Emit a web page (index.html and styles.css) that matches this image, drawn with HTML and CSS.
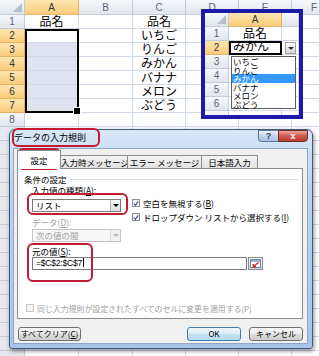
FILE: index.html
```html
<!DOCTYPE html>
<html lang="ja">
<head>
    <meta charset="UTF-8">
    <title>データの入力規則</title>
    <link rel="stylesheet" href="styles.css">
</head>
<body>

    <!-- Worksheet behind everything -->
    <div class="sheet">
        <div class="hd corner"></div>
        <div class="hd on">A</div>
        <div class="hd">B</div>
        <div class="hd">C</div>
        <div class="hd">D</div>
        <div class="hd">E</div>
        <div class="hd last">F</div>

        <div class="hd">1</div><div class="cell">品名</div><div class="cell"></div><div class="cell">品名</div><div class="cell"></div><div class="cell"></div><div class="cell"></div>
        <div class="hd on">2</div><div class="cell"></div><div class="cell"></div><div class="cell">いちご</div><div class="cell"></div><div class="cell"></div><div class="cell"></div>
        <div class="hd on">3</div><div class="cell pick"></div><div class="cell"></div><div class="cell">りんご</div><div class="cell"></div><div class="cell"></div><div class="cell"></div>
        <div class="hd on">4</div><div class="cell pick"></div><div class="cell"></div><div class="cell">みかん</div><div class="cell"></div><div class="cell"></div><div class="cell"></div>
        <div class="hd on">5</div><div class="cell pick"></div><div class="cell"></div><div class="cell">バナナ</div><div class="cell"></div><div class="cell"></div><div class="cell"></div>
        <div class="hd on">6</div><div class="cell pick"></div><div class="cell"></div><div class="cell">メロン</div><div class="cell"></div><div class="cell"></div><div class="cell"></div>
        <div class="hd on">7</div><div class="cell pick"></div><div class="cell"></div><div class="cell">ぶどう</div><div class="cell"></div><div class="cell"></div><div class="cell"></div>
        <div class="hd">8</div><div class="cell"></div><div class="cell"></div><div class="cell"></div><div class="cell"></div><div class="cell"></div><div class="cell"></div>

        <!-- rows 9 and below, only their edges show -->
        <div class="hd rest"></div><div class="cell rest"></div><div class="cell rest"></div><div class="cell rest"></div><div class="cell rest"></div><div class="cell rest"></div><div class="cell rest"></div>

        <div class="selection"></div>
    </div>

    <!-- Close-up of the drop-down in action -->
    <div class="closeup">
        <div class="mini">
            <div class="hd corner"></div><div class="hd on">A</div><div class="hd"></div>
            <div class="hd">1</div><div class="cell">品名</div><div class="cell"></div>
            <div class="hd on">2</div><div class="cell active">みかん</div><div class="cell"></div>
            <div class="hd">3</div><div class="cell"></div><div class="cell"></div>
            <div class="hd">4</div><div class="cell"></div><div class="cell"></div>
            <div class="hd">5</div><div class="cell"></div><div class="cell"></div>
            <div class="hd">6</div><div class="cell"></div><div class="cell"></div>
            <div class="hd"></div><div class="cell"></div><div class="cell"></div>
        </div>
        <div class="drop-btn"></div>
        <ul class="drop-list">
            <li>いちご</li>
            <li>りんご</li>
            <li class="hl">みかん</li>
            <li>バナナ</li>
            <li>メロン</li>
            <li>ぶどう</li>
        </ul>
    </div>

    <!-- Data validation dialog -->
    <div class="dialog">
        <div class="titlebar">
            <span class="title">データの入力規則</span>
            <div class="caption">
                <span class="help">?</span>
                <span class="close">x</span>
            </div>
        </div>

        <div class="client">
            <div class="tabs">
                <span class="tab on w1">設定</span>
                <span class="tab w2">入力時メッセージ</span>
                <span class="tab w3">エラー メッセージ</span>
                <span class="tab w4">日本語入力</span>
            </div>

            <div class="panel">
                <div class="group"><span>条件の設定</span></div>

                <div class="split">
                    <div class="left">
                        <div class="label">入力値の種類(<u>A</u>):</div>
                        <div class="combo"><span>リスト</span><i class="arrow"></i></div>
                        <div class="label off spaced">データ(<u>D</u>):</div>
                        <div class="combo off tight"><span>次の値の間</span><i class="arrow"></i></div>
                    </div>
                    <div class="checks">
                        <div class="check"><span class="box"><svg width="7" height="7" viewBox="0 0 7 7"><path d="M1 3.5 L2.8 5.6 L6 1" fill="none" stroke="#33478a" stroke-width="1.3"/></svg></span>空白を無視する(<u>B</u>)</div>
                        <div class="check"><span class="box"><svg width="7" height="7" viewBox="0 0 7 7"><path d="M1 3.5 L2.8 5.6 L6 1" fill="none" stroke="#33478a" stroke-width="1.3"/></svg></span>ドロップダウン リストから選択する(<u>I</u>)</div>
                    </div>
                </div>

                <div class="label source-label">元の値(<u>S</u>):</div>
                <div class="source">
                    <div class="input">=$C$2:$C$7<span class="caret"></span></div>
                    <div class="refbtn">
                        <svg width="11" height="9" viewBox="0 0 11 9">
                            <rect x="0.5" y="0.5" width="10" height="8" fill="#fff" stroke="#6b84ad"/>
                            <rect x="1" y="1" width="9" height="2" fill="#9db4d8"/>
                            <path d="M8.5 3.5 L3.5 7.5 M3.2 5 L3.2 7.8 L6 7.8" fill="none" stroke="#d0202a" stroke-width="1.4"/>
                        </svg>
                    </div>
                </div>

                <div class="check off apply"><span class="box"></span>同じ入力規則が設定されたすべてのセルに変更を適用する(P)</div>
            </div>

            <div class="buttons">
                <button class="btn wide">すべてクリア(<u>C</u>)</button>
                <span class="spacer"></span>
                <button class="btn default">OK</button>
                <button class="btn">キャンセル</button>
            </div>
        </div>

        <!-- red annotation rings -->
        <div class="mark mark-title"></div>
        <div class="mark mark-tab"></div>
        <div class="mark mark-type"></div>
        <div class="mark mark-source"></div>
    </div>

</body>
</html>
```

FILE: styles.css
```css
* {
    box-sizing: border-box;
}

body {
    margin: 0;
    width: 320px;
    height: 356px;
    overflow: hidden;
    position: relative;
    background: #fff;
    font-family: "Noto Sans CJK JP", sans-serif;
    color: #000;
}

/* Worksheet */
.sheet {
    position: relative;
    display: grid;
    grid-template-columns: 25px 54px 54px 53px 53px 53px 28px;
    grid-template-rows: 15px repeat(8, 14px) 240px;
    width: 320px;
}

.hd {
    display: flex;
    align-items: center;
    justify-content: center;
    background: linear-gradient(#f5f7fa, #e1e6ed);
    border-right: 1px solid #c3cbd6;
    border-bottom: 1px solid #c3cbd6;
    color: #5b6578;
    font: 10px "Liberation Sans", sans-serif;
}

.hd.last {
    justify-content: flex-end;
    padding-right: 2px;
}

.hd.on {
    background: linear-gradient(#fde5b0, #f8cd7c);
    border-color: #e4b463;
    color: #363636;
}

.corner {
    position: relative;
}

.corner::after {
    content: "";
    position: absolute;
    right: 2px;
    bottom: 2px;
    border-left: 9px solid transparent;
    border-bottom: 9px solid #b5bfcc;
}

.cell {
    display: flex;
    align-items: flex-end;
    justify-content: center;
    border-right: 1px solid #d0d7e5;
    border-bottom: 1px solid #d0d7e5;
    font-size: 12px;
    line-height: 1;
    padding-bottom: 1px;
    white-space: nowrap;
}

.cell.pick {
    background: #dfe2ef;
}

.cell.rest {
    border-bottom: none;
    background: repeating-linear-gradient(transparent 0 13px, #d0d7e5 13px 14px);
}

.hd.rest {
    border-bottom: none;
    background: repeating-linear-gradient(#e5e9ef 0 13px, #c3cbd6 13px 14px);
}

/* outline of the picked range A2:A7, laid over the cells */
.selection {
    position: absolute;
    grid-column: 2 / 3;
    grid-row: 3 / 9;
    inset: 0;
    border: 2px solid #000;
}

.selection::after {
    content: "";
    position: absolute;
    right: -4px;
    bottom: -4px;
    width: 6px;
    height: 6px;
    background: #000;
    border: 1px solid #fff;
}

/* Close-up box */
.closeup {
    position: absolute;
    left: 201px;
    top: 9px;
    width: 102px;
    height: 110px;
    border: 4px solid #1b1ba8;
    background: #fff;
}

.mini {
    display: grid;
    grid-template-columns: 24px 53px 17px;
    grid-auto-rows: 14px;
    height: 102px;
    overflow: hidden;
}

.cell.active {
    border: 2px solid #000;
    justify-content: flex-start;
    padding-left: 2px;
}

.drop-btn {
    position: absolute;
    left: 80px;
    top: 29px;
    width: 11px;
    height: 12px;
    border: 1px solid #a3a3a3;
    background: linear-gradient(#fbfbfb, #d9d9d9);
}

.drop-btn::after {
    content: "";
    position: absolute;
    left: 2px;
    top: 4px;
    border-left: 3px solid transparent;
    border-right: 3px solid transparent;
    border-top: 3px solid #333;
}

.drop-list {
    position: absolute;
    left: 26px;
    top: 43px;
    width: 65px;
    margin: 0;
    padding: 0;
    list-style: none;
    background: #fff;
    border: 1px solid #5e5e5e;
    font-size: 8.5px;
    line-height: 8.5px;
}

.drop-list li {
    padding-left: 1px;
}

.drop-list li.hl {
    background: #3399ff;
    color: #fff;
}

/* Dialog window */
.dialog {
    position: absolute;
    left: 9px;
    top: 129px;
    width: 304px;
    height: 220px;
    display: flex;
    flex-direction: column;
    border: 1px solid #3d5a80;
    border-radius: 6px 6px 3px 3px;
    background: linear-gradient(#d8e7f8, #bcd3ef 25%, #a8c5e8);
    box-shadow: 1px 2px 4px rgba(0, 0, 0, 0.45);
}

.titlebar {
    height: 18px;
    display: flex;
    justify-content: space-between;
    align-items: flex-start;
    padding: 0 4px;
}

.title {
    font-size: 9px;
    line-height: 16px;
}

.caption {
    display: flex;
}

.caption span {
    height: 12px;
    display: flex;
    align-items: center;
    justify-content: center;
    font: bold 9px "Liberation Sans", sans-serif;
}

.help {
    width: 20px;
    color: #2c3f5c;
    background: linear-gradient(#eef4fb, #c1d4ea 50%, #aac3e2);
    border: 1px solid #5f7898;
    border-right: none;
    border-radius: 0 0 0 4px;
}

.close {
    width: 30px;
    color: #fff;
    background: linear-gradient(#eba79e, #d0584c 50%, #b83a30);
    border: 1px solid #6e2b26;
    border-radius: 0 0 4px 0;
}

.client {
    flex: 1;
    margin: 0 4px 4px 3px;
    background: #f0f0f0;
    border: 1px solid #8ea6c4;
    font-size: 8.5px;
}

.tabs {
    height: 19px;
    display: flex;
    align-items: flex-end;
    padding-left: 3px;
    position: relative;
    z-index: 1;
}

.tab {
    height: 13px;
    margin-left: -1px;
    border: 1px solid #898c95;
    border-bottom: none;
    background: linear-gradient(#f4f4f4, #e1e1e1);
    text-align: center;
    line-height: 12px;
    white-space: nowrap;
}

.tab.on {
    height: 19px;
    margin-left: 0;
    margin-bottom: -1px;
    background: #fff;
    line-height: 18px;
}

.w1 { width: 44px; }
.w2 { width: 68px; }
.w3 { width: 75px; }
.w4 { width: 57px; }

.panel {
    height: 151px;
    margin: 0 4px 0 3px;
    padding-left: 14px;
    background: #fff;
    border: 1px solid #898c95;
}

.group {
    margin: 5px 4px 0 -8px;
    height: 11px;
    line-height: 11px;
    display: flex;
    align-items: center;
}

.group::after {
    content: "";
    flex: 1;
    height: 1px;
    margin-left: 3px;
    background: #d5dfe5;
}

.label {
    height: 11px;
    line-height: 11px;
    white-space: nowrap;
}

.off {
    color: #a0a0a0;
}

.split {
    display: flex;
}

.combo {
    position: relative;
    width: 89px;
    height: 13px;
    margin-top: 3px;
    padding-left: 3px;
    line-height: 11px;
    border: 1px solid #7b7b7b;
    background: #fff;
}

.combo .arrow {
    position: absolute;
    right: 0;
    top: 0;
    width: 10px;
    height: 11px;
    border-left: 1px solid #b5b5b5;
    background: linear-gradient(#f7f7f7, #dcdcdc);
}

.combo .arrow::after {
    content: "";
    position: absolute;
    left: 2px;
    top: 4px;
    border-left: 3px solid transparent;
    border-right: 3px solid transparent;
    border-top: 3px solid #000;
}

.combo.off {
    border-color: #c6c6c6;
    background: #f6f6f6;
}

.combo.off .arrow {
    border-left-color: #dadada;
    background: #f1f1f1;
}

.combo.off .arrow::after {
    border-top-color: #b4b4b4;
}

.spaced {
    margin-top: 5px;
}

.tight {
    margin-top: 1px;
}

.checks {
    margin-left: 11px;
    padding-top: 11px;
}

.check {
    height: 14px;
    display: flex;
    align-items: center;
    white-space: nowrap;
}

.box {
    width: 8px;
    height: 8px;
    margin-right: 3px;
    display: flex;
    align-items: center;
    justify-content: center;
    border: 1px solid #8e8f8f;
    background: linear-gradient(#f0f0f0, #ffffff);
}

.check.off .box {
    border-color: #c6c6c6;
    background: #f4f4f4;
}

.source-label {
    margin-top: 4px;
}

.source {
    display: flex;
    gap: 1px;
}

.input {
    width: 215px;
    height: 13px;
    padding-left: 3px;
    line-height: 11px;
    border: 1px solid #7b7b7b;
    background: #fff;
    font-family: "Liberation Sans", sans-serif;
    letter-spacing: -0.2px;
}

.caret {
    display: inline-block;
    width: 1px;
    height: 9px;
    margin-left: 1px;
    vertical-align: -1px;
    background: #000;
}

.refbtn {
    width: 15px;
    height: 13px;
    display: flex;
    align-items: center;
    justify-content: center;
    border: 1px solid #8b8b8b;
    background: linear-gradient(#f7f7f7, #d8d8d8);
}

.apply {
    margin: 31px 0 0 -6px;
    font-size: 8px;
    letter-spacing: -0.1px;
}

.buttons {
    display: flex;
    gap: 8px;
    margin: 8px 4px 0 4px;
}

.spacer {
    flex: 1;
}

.btn {
    width: 54px;
    height: 14px;
    padding: 0;
    font: 8px "Noto Sans CJK JP", sans-serif;
    line-height: 12px;
    color: #000;
    border: 1px solid #707070;
    border-radius: 3px;
    background: linear-gradient(#f6f6f6, #ebebeb 50%, #dcdcdc 50%, #cfcfcf);
}

.btn.wide {
    width: 63px;
}

.btn.default {
    border-color: #3c7fb1;
    background: linear-gradient(#eef7fc, #d9edf8 50%, #c5e3f3 50%, #b6d9ec);
}

/* Red annotation rings */
.mark {
    position: absolute;
    border: 2px solid #c21c33;
    border-radius: 6px;
}

.mark-title  { left: 2px;  top: -2px; width: 88px;  height: 19px; }
.mark-tab    { left: 7px;  top: 18px; width: 44px;  height: 22px; }
.mark-type   { left: 17px; top: 63px; width: 101px; height: 22px; }
.mark-source { left: 17px; top: 113px; width: 66px; height: 39px; }
```
